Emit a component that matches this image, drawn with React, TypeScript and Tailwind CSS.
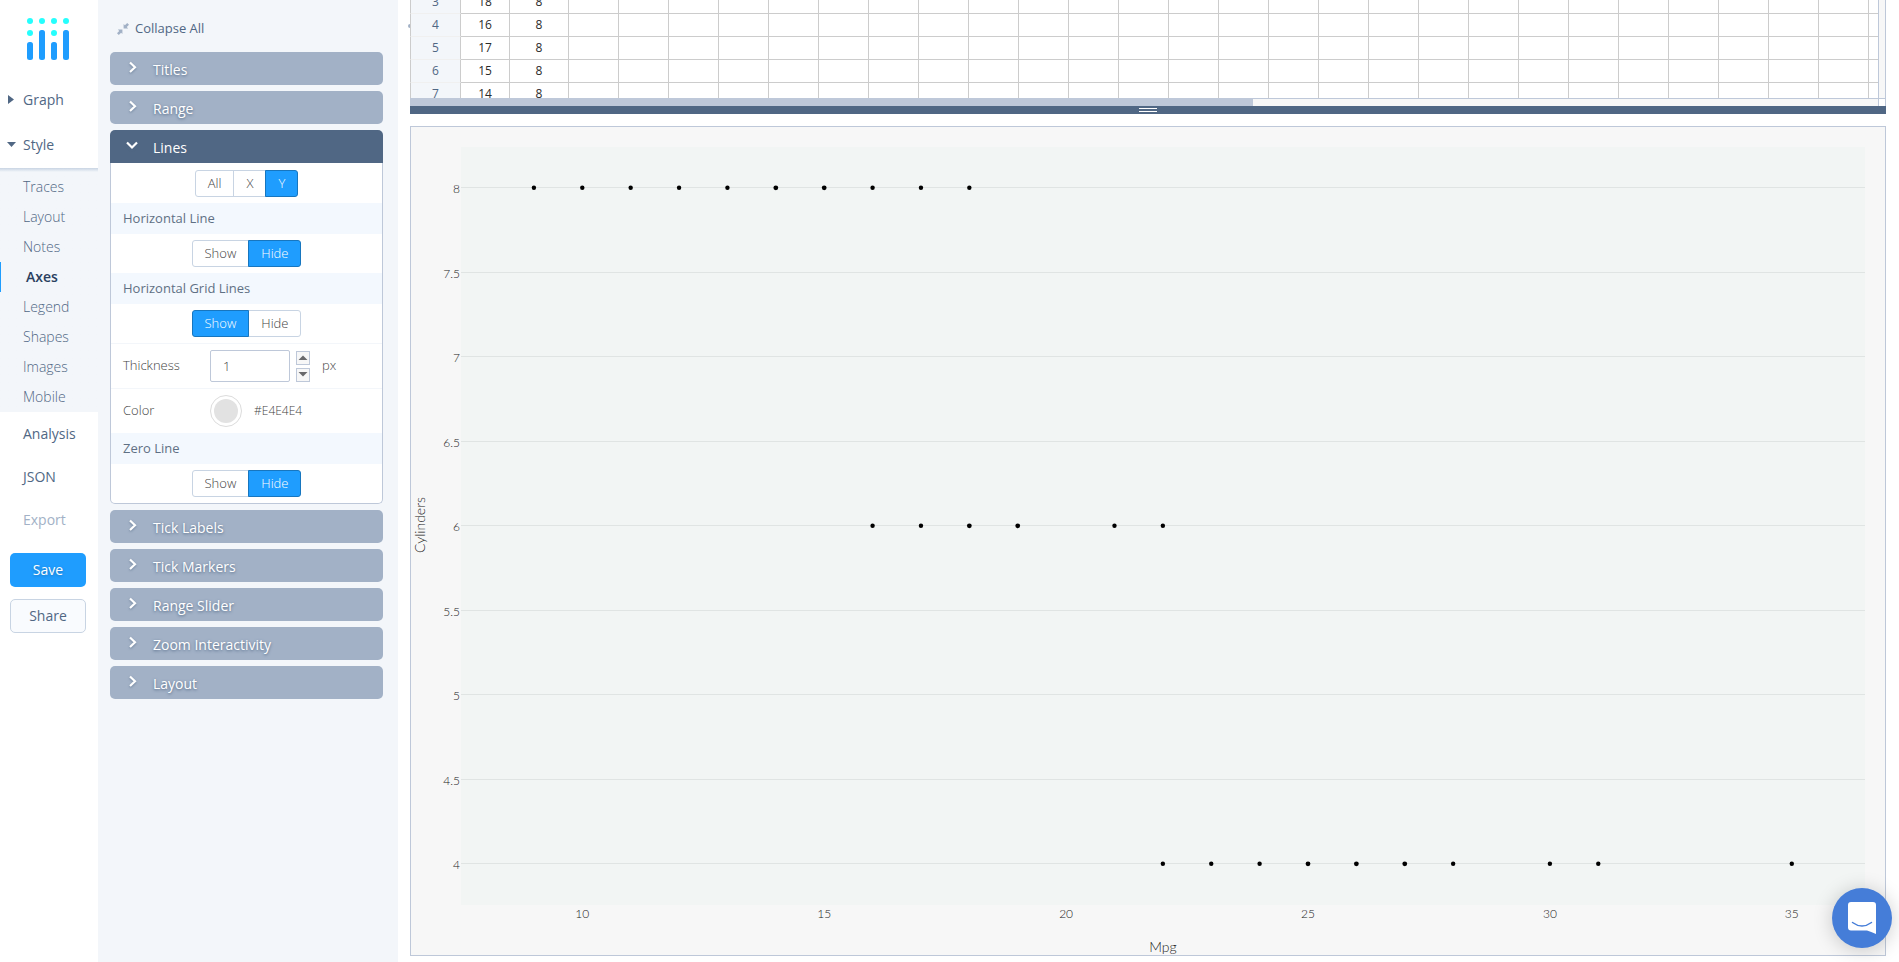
import { useState } from "react";

const primaryNav = ["Traces", "Layout", "Notes", "Axes", "Legend", "Shapes", "Images", "Mobile"];

const sheetRows = [
  { id: 3, mpg: 18, cyl: 8 },
  { id: 4, mpg: 16, cyl: 8 },
  { id: 5, mpg: 17, cyl: 8 },
  { id: 6, mpg: 15, cyl: 8 },
  { id: 7, mpg: 14, cyl: 8 },
];
const emptyCols = Array.from({ length: 27 }, (_, i) => i);

const points: Record<number, number[]> = {
  8: [9, 10, 11, 12, 13, 14, 15, 16, 17, 18],
  6: [16, 17, 18, 19, 21, 22],
  4: [22, 23, 24, 25, 26, 27, 28, 30, 31, 35],
};
const repeated = ["8-14", "8-15", "6-18", "6-19", "4-25", "4-26", "4-27"];
const yTicks = [8, 7.5, 7, 6.5, 6, 5.5, 5, 4.5, 4];
const xTicks = [10, 15, 20, 25, 30, 35];
const xPos = (v: number) => 171.3 + (v - 10) * 48.38;
const yPos = (v: number) => Math.round(60 + (8 - v) * 169) + 0.5;

function Logo() {
  const cols = [
    { x: 0, dots: [0, 12], bar: 24 },
    { x: 12, dots: [0], bar: 12 },
    { x: 24, dots: [0, 12], bar: 24 },
    { x: 36, dots: [0], bar: 12 },
  ];
  return (
    <svg width="42" height="42" viewBox="0 0 42 42" aria-hidden="true">
      {cols.map((c) => (
        <g key={c.x}>
          {c.dots.map((y) => (
            <circle key={y} cx={c.x + 3} cy={y + 3} r="3" fill="#25fefd" />
          ))}
          <rect x={c.x} y={c.bar} width="6" height={42 - c.bar} rx="2.5" fill="#1f9dfe" />
        </g>
      ))}
    </svg>
  );
}

function Chevron({ open }: { open?: boolean }) {
  return (
    <svg width="12" height="12" viewBox="0 0 12 12" fill="none" stroke="#fff" strokeWidth="2.2" className="mb-1 drop-shadow-[0_1px_1px_rgba(80,103,132,0.6)]" aria-hidden="true">
      <path d={open ? "M1 3.5 L6 8.5 L11 3.5" : "M4 1.5 L9 6.3 L4 11"} />
    </svg>
  );
}

function Section({ title, open }: { title: string; open?: boolean }) {
  return (
    <button
      type="button"
      aria-expanded={!!open}
      className={
        open
          ? "flex h-[33px] w-full items-center gap-[15px] rounded-t-[5px] bg-[#506784] pl-4 pt-px text-left text-[14px] font-medium text-white"
          : "flex h-[33px] w-full items-center gap-[15px] rounded-[5px] bg-[#a2b1c6] pl-4 pt-px text-left text-[14px] font-medium text-white"
      }
    >
      <Chevron open={open} />
      <span className="[text-shadow:0_1px_3px_#506784]">{title}</span>
    </button>
  );
}

function Choice({ label, options, initial }: { label: string; options: string[]; initial: string }) {
  const [value, setValue] = useState(initial);
  return (
    <div role="group" aria-label={label} className="flex justify-center py-[6px]">
      {options.map((o) => (
        <button
          key={o}
          type="button"
          aria-pressed={o === value}
          onClick={() => setValue(o)}
          className={
            o === value
              ? "relative -ml-px h-[27px] border border-[#1776bf] bg-[#1f9dfe] px-3 text-[13px] leading-[25px] font-light text-white first:ml-0 first:rounded-l-[3px] last:rounded-r-[3px]"
              : "-ml-px h-[27px] border border-[#c8d4e3] bg-white px-3 text-[13px] leading-[25px] font-light text-[#444] first:ml-0 first:rounded-l-[3px] last:rounded-r-[3px]"
          }
        >
          {o}
        </button>
      ))}
    </div>
  );
}

function Heading({ children }: { children: string }) {
  return <h3 className="h-[31px] bg-[#f3f8fe] pl-3 text-[13px] leading-[30px] font-normal text-[#5f7084]">{children}</h3>;
}

function Stepper({ up, onClick }: { up?: boolean; onClick: () => void }) {
  return (
    <button
      type="button"
      aria-label={up ? "Increase thickness" : "Decrease thickness"}
      onClick={onClick}
      className="flex size-[14px] items-center justify-center border border-[#bec8d9] bg-[#f7f7f7]"
    >
      <svg width="10" height="5" viewBox="0 0 10 5" aria-hidden="true">
        <path d={up ? "M0.5 5 L5 0.5 L9.5 5Z" : "M0.5 0 L5 4.5 L9.5 0Z"} fill="#69696b" />
      </svg>
    </button>
  );
}

function LinesPanel() {
  const [width, setWidth] = useState(1);
  return (
    <section>
      <Section title="Lines" open />
      <div className="rounded-b-[5px] border border-t-0 border-[#bec8d9] bg-white">
        <div className="pt-px">
          <Choice label="Axis" options={["All", "X", "Y"]} initial="Y" />
        </div>
        <Heading>Horizontal Line</Heading>
        <Choice label="Horizontal line" options={["Show", "Hide"]} initial="Hide" />
        <Heading>Horizontal Grid Lines</Heading>
        <Choice label="Grid lines" options={["Show", "Hide"]} initial="Show" />
        <div className="flex items-center border-t border-[#f3f6fa] py-[6px] pl-3 text-[13px]">
          <label htmlFor="thickness" className="w-[87px] font-light text-[#444]">Thickness</label>
          <input
            id="thickness"
            value={width}
            onChange={(e) => setWidth(Number(e.target.value) || 0)}
            className="h-8 w-20 rounded-[2px] border border-[#bec8d9] bg-white px-3 text-[13px] font-light text-[#444] outline-none"
          />
          <span className="ml-[6px] flex flex-col gap-[3px]">
            <Stepper up onClick={() => setWidth(width + 1)} />
            <Stepper onClick={() => setWidth(Math.max(0, width - 1))} />
          </span>
          <span className="ml-3 font-light text-[#444]">px</span>
        </div>
        <div className="flex items-center border-t border-[#f3f6fa] py-[6px] pl-3 text-[13px]">
          <span className="w-[87px] font-light text-[#444]">Color</span>
          <button type="button" aria-label="Pick grid line color" className="flex size-8 items-center justify-center rounded-full border border-[#dcdcdc] bg-white">
            <span className="size-6 rounded-full bg-[#e2e2e2]" />
          </button>
          <span className="ml-3 text-[12px] font-light text-[#444]">#E4E4E4</span>
        </div>
        <Heading>Zero Line</Heading>
        <Choice label="Zero line" options={["Show", "Hide"]} initial="Hide" />
      </div>
    </section>
  );
}

function Sidebar() {
  const link = "flex h-[43px] items-center pb-px pl-[23px] text-[14px]";
  return (
    <nav className="w-[98px] shrink-0 bg-white text-[#506784]">
      <a href="#home" aria-label="Home" className="flex h-[78px] pt-[18px] pl-[27px]">
        <Logo />
      </a>
      <a href="#graph" className="flex h-[45px] items-center gap-[9px] pb-[2px] pl-2 text-[14px]">
        <svg width="6" height="9" viewBox="0 0 6 9" aria-hidden="true"><path d="M0 0 L6 4.5 L0 9Z" fill="#506784" /></svg>
        Graph
      </a>
      <a href="#style" className="flex h-[45px] items-center gap-[7px] bg-white pb-[2px] pl-[7px] text-[14px]">
        <svg width="9" height="5" viewBox="0 0 9 5" aria-hidden="true"><path d="M0 0 L9 0 L4.5 5Z" fill="#506784" /></svg>
        Style
      </a>
      <ul className="bg-[#f3f6fa] bg-linear-to-b from-[#c8d4e3] to-[#f3f6fa] to-[4px] pt-1">
        {primaryNav.map((item) => (
          <li key={item}>
            <a
              href={"#" + item.toLowerCase()}
              className={
                item === "Axes"
                  ? "flex h-[30px] items-center border-l border-[#1f9dfe] pb-[2px] pl-[25px] text-[14px] font-semibold text-[#2a3f5f]"
                  : "flex h-[30px] items-center pb-[2px] pl-[23px] text-[14px] font-light"
              }
            >
              {item}
            </a>
          </li>
        ))}
      </ul>
      <a href="#analysis" className={link}>Analysis</a>
      <a href="#json" className={link}>JSON</a>
      <a href="#export" className="flex h-[43px] items-center pb-px pl-[23px] text-[14px] text-[#a2b1c6]">Export</a>
      <div className="flex flex-col gap-3 py-3 pr-3 pl-[10px]">
        <button type="button" className="h-[34px] rounded-[5px] bg-[#1f9dfe] pb-px text-[14px] font-medium text-white [text-shadow:0_1px_3px_#1776bf]">Save</button>
        <button type="button" className="h-[34px] rounded-[5px] border border-[#c8d4e3] bg-[#f9fbfe] pb-px text-[14px] font-medium text-[#506784]">Share</button>
      </div>
    </nav>
  );
}

function Spreadsheet() {
  return (
    <div className="relative">
      <span className="absolute top-[24px] -left-[2px] h-[4px] w-[2px] rounded-l-full bg-[#a2b1c6]" />
      <div className="flex h-[98px] overflow-hidden border-r border-[#bec8d9]">
        <div className="min-w-0 flex-1 overflow-hidden border-r border-[#bec8d9]">
          <table className="-mt-[9px] w-[1509px] table-fixed border-separate border-spacing-0 text-[12px] text-[#2a2a2a]">
            <colgroup>
              <col className="w-[51px]" />
              <col className="w-[49px]" />
              <col className="w-[59px]" />
              {emptyCols.map((c) => <col key={c} className="w-[50px]" />)}
            </colgroup>
            <tbody>
              {sheetRows.map((r) => (
                <tr key={r.id} className="h-[23px]">
                  <th scope="row" className="border-x border-b border-x-[#ccc] border-b-[#f0f0f0] bg-[#f3f6fa] p-0 leading-[22px] font-normal text-[#506784]">{r.id}</th>
                  <td className="border-r border-b border-[#ccc] p-0 text-center leading-[22px]">{r.mpg}</td>
                  <td className="border-r border-b border-[#ccc] p-0 text-center leading-[22px]">{r.cyl}</td>
                  {emptyCols.map((c) => <td key={c} className="border-r border-b border-[#ccc] p-0" />)}
                </tr>
              ))}
            </tbody>
          </table>
        </div>
        <div className="w-[6px] bg-[#f7f7f7]" />
      </div>
      <div className="flex h-2 border-t border-r border-[#bec8d9] bg-[#f7f7f7]">
        <div className="flex-1"><div className="h-full w-[57.4%] bg-[#bec8d9]" /></div>
        <div className="w-[7px] border-l border-[#bec8d9] bg-white" />
      </div>
      <div className="flex h-2 flex-col items-center justify-center gap-[2px] bg-[#506784]">
        <span className="h-px w-[18px] bg-white" />
        <span className="h-px w-[18px] bg-white" />
      </div>
    </div>
  );
}

function Chart() {
  return (
    <div className="mt-3 border border-[#bec8d9] bg-[#f7f7f7]">
      <svg viewBox="0 0 1474 828" className="block h-auto w-full font-['Lato',sans-serif] font-light" role="img" aria-label="Cylinders by Mpg">
        <rect x="50" y="20" width="1404" height="758" fill="#f2f5f4" />
        {yTicks.map((t) => (
          <g key={t}>
            <line x1="50" x2="1454" y1={yPos(t)} y2={yPos(t)} stroke="#e0e4e3" />
            <text x="49" y={yPos(t) + 5} textAnchor="end" fontSize="12" fill="#222">{t}</text>
          </g>
        ))}
        {Object.entries(points).map(([y, xs]) =>
          xs.map((x) => {
            const id = y + "-" + x;
            return <circle key={id} cx={xPos(x)} cy={yPos(Number(y)) + 0.3} r={repeated.includes(id) ? 2.4 : 2.2} fill="#000" />;
          })
        )}
        {xTicks.map((t) => (
          <text key={t} x={xPos(t)} y="791" textAnchor="middle" fontSize="12" fill="#222">{t}</text>
        ))}
        <text x="752" y="825" textAnchor="middle" fontSize="14" fill="#222">Mpg</text>
        <text transform="translate(14 398) rotate(-90)" textAnchor="middle" fontSize="14" fill="#222">Cylinders</text>
      </svg>
    </div>
  );
}

export default function App() {
  return (
    <div className="flex min-h-screen bg-white font-['Open_Sans',sans-serif]">
      <Sidebar />
      <aside className="w-[300px] shrink-0 bg-[#f3f6fa] pr-[15px] pl-3">
        <button type="button" className="flex h-[52px] items-center gap-[6px] pt-[6px] pl-[7px] text-[13px] text-[#506784]">
          <svg width="12" height="12" viewBox="0 0 12 12" fill="#a2b1c6" aria-hidden="true">
            <path d="M6.6 0.9 L7.9 2.2 L10.2 0 L12 1.8 L9.8 4.1 L11.1 5.4 L6.6 5.4Z" />
            <path d="M5.4 11.1 L4.1 9.8 L1.8 12 L0 10.2 L2.2 7.9 L0.9 6.6 L5.4 6.6Z" />
          </svg>
          Collapse All
        </button>
        <div className="flex flex-col gap-[6px]">
          <Section title="Titles" />
          <Section title="Range" />
          <LinesPanel />
          <Section title="Tick Labels" />
          <Section title="Tick Markers" />
          <Section title="Range Slider" />
          <Section title="Zoom Interactivity" />
          <Section title="Layout" />
        </div>
      </aside>
      <main className="min-w-0 flex-1 pr-[13px] pl-3">
        <Spreadsheet />
        <Chart />
      </main>
      <button
        type="button"
        aria-label="Open chat"
        className="fixed right-[7px] bottom-[14px] flex size-[60px] items-center justify-center rounded-full bg-[#457dd8] shadow-[0_2px_20px_rgba(0,0,0,0.2)]"
      >
        <svg width="28" height="32" viewBox="0 0 28 32" aria-hidden="true">
          <path d="M3 0 H25 Q28 0 28 3 V32 Q23 29.5 19 28.5 H3 Q0 28.5 0 25.5 V3 Q0 0 3 0Z" fill="#fff" />
          <path d="M4.5 20.5 Q14 27.5 23.5 20.5" fill="none" stroke="#457dd8" strokeWidth="1.5" strokeLinecap="round" />
        </svg>
      </button>
    </div>
  );
}
